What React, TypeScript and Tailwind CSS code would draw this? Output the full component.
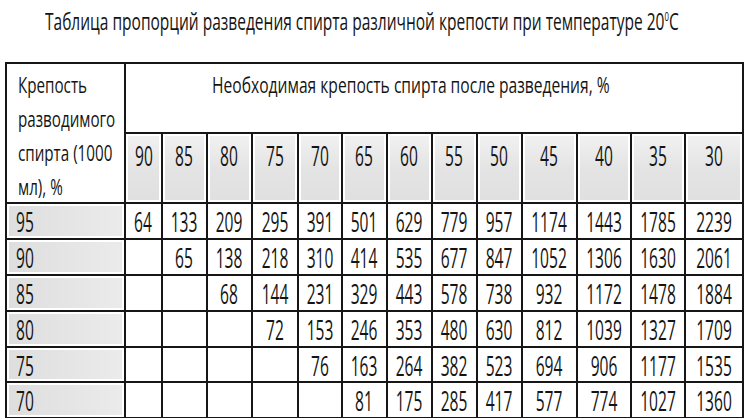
const COLS = ['90', '85', '80', '75', '70', '65', '60', '55', '50', '45', '40', '35', '30'];

// пустые ячейки — null
const ROWS: { k: string; v: (number | null)[] }[] = [
  { k: '95', v: [64, 133, 209, 295, 391, 501, 629, 779, 957, 1174, 1443, 1785, 2239] },
  { k: '90', v: [null, 65, 138, 218, 310, 414, 535, 677, 847, 1052, 1306, 1630, 2061] },
  { k: '85', v: [null, null, 68, 144, 231, 329, 443, 578, 738, 932, 1172, 1478, 1884] },
  { k: '80', v: [null, null, null, 72, 153, 246, 353, 480, 630, 812, 1039, 1327, 1709] },
  { k: '75', v: [null, null, null, null, 76, 163, 264, 382, 523, 694, 906, 1177, 1535] },
  { k: '70', v: [null, null, null, null, null, 81, 175, 285, 417, 577, 774, 1027, 1360] },
];

const font = { fontFamily: '"Open Sans", "Noto Sans", sans-serif' };

function Num({ children }: { children: React.ReactNode }) {
  return (
    <span className="inline-block origin-center scale-x-[0.556] whitespace-nowrap text-[28px] leading-none">
      {children}
    </span>
  );
}

export default function App() {
  return (
    <div className="w-[750px] h-[418px] overflow-hidden bg-white text-[#141414]" style={font}>
      <h1 className="h-[62px] pl-[45px] pt-[8px] font-normal">
        <span className="inline-block origin-left scale-x-[0.646] whitespace-nowrap text-[24px] leading-[26px]">
          Таблица пропорций разведения спирта различной крепости при температуре 20
          <span className="relative -top-[9px] text-[12px]">0</span>C
        </span>
      </h1>

      <div className="ml-[5px] inline-grid grid-cols-[117px_35px_43px_43px_44px_42px_43px_43px_43px_43px_53px_52px_52px_56px] grid-rows-[68px_68px_34px_34px_34px_34px_33px_34px] gap-[2px] bg-[#161616] p-[2px]">
        <div className="row-span-2 bg-white pl-[11px] pt-[3px]">
          {['Крепость', 'разводимого', 'спирта (1000', 'мл), %'].map((line) => (
            <div key={line} className="h-[34px] whitespace-nowrap">
              <span className="inline-block origin-left scale-x-[0.69] text-[22px] leading-[34px]">{line}</span>
            </div>
          ))}
        </div>
        <div className="col-span-13 bg-white pl-[86px] pt-[3px]">
          <span className="inline-block origin-left scale-x-[0.71] whitespace-nowrap text-[22px] leading-[34px]">
            Необходимая крепость спирта после разведения, %
          </span>
        </div>

        {COLS.map((c) => (
          <div key={c} className="bg-white p-[2px]">
            <div className="h-full bg-gradient-to-b from-[#f1f1f1] via-[#e4e4e4] to-[#e0e0e0] pt-[5px] text-center">
              <Num>{c}</Num>
            </div>
          </div>
        ))}

        {ROWS.map((r) => (
          <div key={r.k} className="contents">
            <div className="bg-white p-[2px]">
              <div className="flex h-full items-center bg-gradient-to-r from-[#dedede] to-[#ebebeb] pl-[7px]">
                <span className="inline-block origin-left scale-x-[0.556] text-[28px] leading-none">{r.k}</span>
              </div>
            </div>
            {r.v.map((n, i) => (
              <div key={i} className="flex items-center justify-center bg-white">
                {n !== null && <Num>{n}</Num>}
              </div>
            ))}
          </div>
        ))}
      </div>
    </div>
  );
}
